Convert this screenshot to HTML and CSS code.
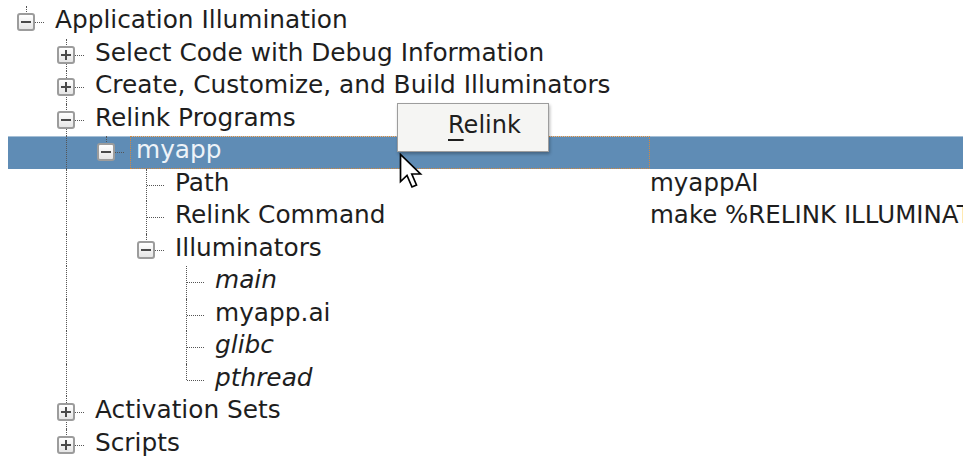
FILE: index.html
```html
<!DOCTYPE html>
<html>
<head>
<meta charset="utf-8">
<link rel="stylesheet" href="styles.css">
</head>
<body>
<div class="tree">
  <div class="row"><div class="tc"><span class="c end"><span class="box"></span></span><span class="label">Application Illumination</span></div></div>
  <div class="row"><div class="tc"><span class="g"></span><span class="c"><span class="box plus"></span></span><span class="label">Select Code with Debug Information</span></div></div>
  <div class="row"><div class="tc"><span class="g"></span><span class="c"><span class="box plus"></span></span><span class="label">Create, Customize, and Build Illuminators</span></div></div>
  <div class="row"><div class="tc"><span class="g"></span><span class="c"><span class="box"></span></span><span class="label">Relink Programs</span></div></div>
  <div class="row sel"><div class="tc"><span class="g"></span><span class="g v"></span><span class="c end"><span class="box"></span></span><span class="label focus">myapp</span></div></div>
  <div class="row"><div class="tc"><span class="g"></span><span class="g v"></span><span class="g"></span><span class="c"></span><span class="label">Path</span></div><div class="val">myappAI</div></div>
  <div class="row"><div class="tc"><span class="g"></span><span class="g v"></span><span class="g"></span><span class="c"></span><span class="label">Relink Command</span></div><div class="val">make %RELINK ILLUMINATORS%</div></div>
  <div class="row"><div class="tc"><span class="g"></span><span class="g v"></span><span class="g"></span><span class="c end"><span class="box"></span></span><span class="label">Illuminators</span></div></div>
  <div class="row"><div class="tc"><span class="g"></span><span class="g v"></span><span class="g"></span><span class="g"></span><span class="c"></span><span class="label it">main</span></div></div>
  <div class="row"><div class="tc"><span class="g"></span><span class="g v"></span><span class="g"></span><span class="g"></span><span class="c"></span><span class="label">myapp.ai</span></div></div>
  <div class="row"><div class="tc"><span class="g"></span><span class="g v"></span><span class="g"></span><span class="g"></span><span class="c"></span><span class="label it">glibc</span></div></div>
  <div class="row"><div class="tc"><span class="g"></span><span class="g v"></span><span class="g"></span><span class="g"></span><span class="c end"></span><span class="label it">pthread</span></div></div>
  <div class="row"><div class="tc"><span class="g"></span><span class="c"><span class="box plus"></span></span><span class="label">Activation Sets</span></div></div>
  <div class="row"><div class="tc"><span class="g"></span><span class="c end"><span class="box plus"></span></span><span class="label">Scripts</span></div></div>
</div>
<div class="menu"><span class="item"><u>R</u>elink</span></div>
<svg class="cursor" width="28" height="40" viewBox="0 0 28 40"><path d="M1.5 1.5 L1.5 28.5 L8 22.5 L13 34 L17.5 32 L12.8 21 L21.5 21 Z" fill="#fff" stroke="#000" stroke-width="1.7" stroke-linejoin="miter"/></svg>
</body>
</html>
```
FILE: styles.css
```css
* { box-sizing: border-box; }
html, body { margin: 0; background: #fff; }
body {
  font-family: "DejaVu Sans", "Noto Sans", sans-serif;
  font-size: 24.8px;
  color: #1e1e1e;
  width: 963px;
  height: 457px;
  overflow: hidden;
  position: relative;
}
.tree { padding-top: 6px; }
.row {
  display: flex;
  height: 32.5px;
  margin-left: 8px;
  white-space: nowrap;
}
.row.sel {
  background: #5f8cb5;
  box-shadow: inset 0 1px 0 #a5bfd6;
  color: #eef3f8;
}
.tc { width: 642px; flex: none; display: flex; height: 100%; }
.g, .c { width: 40px; flex: none; position: relative; height: 100%; }
.g.v::before, .c::before {
  content: "";
  position: absolute;
  left: 18px;
  top: 0;
  bottom: 0;
  border-left: 1px dotted #555;
}
.c.end::before { bottom: 50%; }
.c::after {
  content: "";
  position: absolute;
  left: 19px;
  width: 17px;
  top: 16px;
  border-top: 1px dotted #555;
}
.box {
  position: absolute;
  left: 9px;
  top: 7px;
  width: 18px;
  height: 18px;
  border: 2px solid #9c9c9c;
  border-radius: 3px;
  background: linear-gradient(#ffffff, #e6e6e6);
  z-index: 1;
}
.box::before {
  content: "";
  position: absolute;
  left: 2px;
  right: 2px;
  top: 6px;
  height: 2px;
  background: #4a4a4a;
}
.box.plus::after {
  content: "";
  position: absolute;
  top: 2px;
  bottom: 2px;
  left: 6px;
  width: 2px;
  background: #4a4a4a;
}
.label { line-height: 28px; padding-left: 7px; }
.label.focus {
  flex: 1;
  margin-left: 2px;
  padding-left: 5px;
  height: 100%;
  border: 1px dotted #d4893f;
  line-height: 26px;
}
.it { font-style: italic; }
.val { line-height: 28px; font-size: 24.5px; }
.menu {
  position: absolute;
  left: 397px;
  top: 103px;
  width: 152px;
  height: 49px;
  background: #f5f5f3;
  border: 1px solid #9d9d9d;
  box-shadow: 1px 2px 3px rgba(0, 0, 0, 0.28);
  padding: 7px 0 0 50px;
  line-height: 28px;
  font-size: 24px;
  color: #1e1e1e;
}
.menu u {
  text-decoration-thickness: 2px;
  text-underline-offset: 6px;
}
.cursor {
  position: absolute;
  left: 399px;
  top: 153px;
}
```
